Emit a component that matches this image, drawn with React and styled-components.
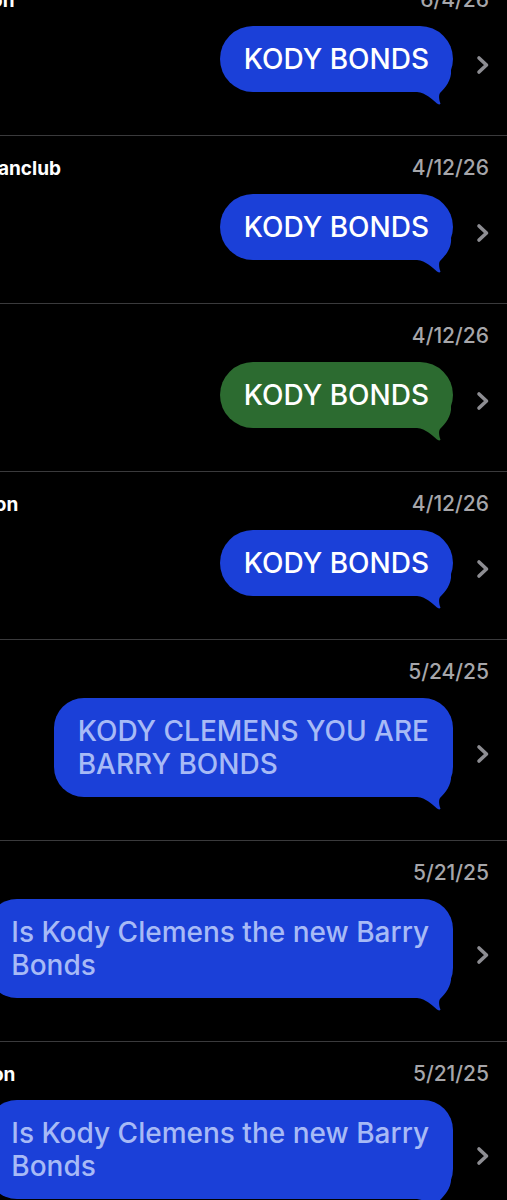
import React from "react";
import styled, { createGlobalStyle } from "styled-components";

const Global = createGlobalStyle`
  html, body {
    margin: 0;
    padding: 0;
    background: #000;
  }
  body {
    font-family: Inter, "Liberation Sans", Arial, sans-serif;
    -webkit-font-smoothing: antialiased;
  }
`;

const tones = {
  imessage: "#1b40d8",
  sms: "#2c6b30",
};

const Screen = styled.main`
  width: 507px;
  height: 1200px;
  overflow: hidden;
  background: #000;
`;

const List = styled.ul`
  list-style: none;
  margin: -33px 0 0 -115px;
  padding: 0;
  width: 622px;
`;

const Result = styled.li`
  border-top: 1px solid #3a3a3c;
  padding: 19px 17px 31px 16px;
`;

const Header = styled.div`
  display: flex;
  justify-content: space-between;
  align-items: baseline;
  height: 25px;
  line-height: 25px;
  padding-right: 1px;
`;

const Sender = styled.span`
  color: #fff;
  font-size: 19px;
  font-weight: 700;
  white-space: nowrap;
`;

const When = styled.span`
  color: #a6a6aa;
  font-size: 21px;
  font-weight: 500;
`;

const Body = styled.div`
  margin-top: 14px;
  display: flex;
  justify-content: flex-end;
  align-items: center;
  gap: 23px;
`;

const Bubble = styled.div`
  position: relative;
  flex-shrink: 0;
  margin-bottom: 12px;
  padding: 16.5px 24px;
  border-radius: ${(p) => (p.$multi ? "30px" : "33px")};
  background: ${(p) => tones[p.$tone]};
  color: ${(p) => (p.$muted ? "#a7baf6" : "#fff")};
  font-size: 28px;
  font-weight: 500;
  line-height: 33px;
  white-space: nowrap;
`;

const TailShape = styled.svg`
  position: absolute;
  right: -2px;
  bottom: -14px;
  width: 42px;
  height: 36px;
  overflow: visible;
`;

function Tail({ color }) {
  return (
    <TailShape viewBox="-40 -22 42 36" aria-hidden="true">
      <path
        d="M -40 -22 L -2 -22 C -1 -12 -8 -4 -13 1 C -14.5 3 -14 8 -12.5 11.5 C -13 12.8 -14.8 12.6 -16 11.6 C -21 7 -27 1 -36 0 L -40 0 Z"
        fill={color}
      />
    </TailShape>
  );
}

const ChevronMark = styled.svg`
  flex-shrink: 0;
  width: 14px;
  height: 20px;
`;

function Chevron() {
  return (
    <ChevronMark viewBox="0 0 14 20" aria-hidden="true">
      <path
        d="M 3 3 L 10.5 10 L 3 17"
        fill="none"
        stroke="#8d8d92"
        strokeWidth="3.6"
        strokeLinecap="round"
        strokeLinejoin="round"
      />
    </ChevronMark>
  );
}

const results = [
  { id: 1, sender: "Dan Carlson", date: "6/4/26", lines: ["KODY BONDS"], tone: "imessage" },
  { id: 2, sender: "Clemens Fanclub", date: "4/12/26", lines: ["KODY BONDS"], tone: "imessage" },
  { id: 3, sender: "Grandpa", date: "4/12/26", lines: ["KODY BONDS"], tone: "sms" },
  { id: 4, sender: "Jen Jackson", date: "4/12/26", lines: ["KODY BONDS"], tone: "imessage" },
  {
    id: 5,
    sender: "Mom",
    date: "5/24/25",
    lines: ["KODY CLEMENS YOU ARE", "BARRY BONDS"],
    tone: "imessage",
    muted: true,
  },
  {
    id: 6,
    sender: "Chris",
    date: "5/21/25",
    lines: ["Is Kody Clemens the new Barry", "Bonds"],
    tone: "imessage",
    muted: true,
  },
  {
    id: 7,
    sender: "Ty Robinson",
    date: "5/21/25",
    lines: ["Is Kody Clemens the new Barry", "Bonds"],
    tone: "imessage",
    muted: true,
  },
];

export default function App() {
  return (
    <>
      <Global />
      <Screen>
        <List>
          {results.map((r) => (
            <Result key={r.id}>
              <Header>
                <Sender>{r.sender}</Sender>
                <When>{r.date}</When>
              </Header>
              <Body>
                <Bubble $tone={r.tone} $muted={r.muted} $multi={r.lines.length > 1}>
                  {r.lines.map((line, i) => (
                    <React.Fragment key={i}>
                      {i > 0 && <br />}
                      {line}
                    </React.Fragment>
                  ))}
                  <Tail color={tones[r.tone]} />
                </Bubble>
                <Chevron />
              </Body>
            </Result>
          ))}
        </List>
      </Screen>
    </>
  );
}
